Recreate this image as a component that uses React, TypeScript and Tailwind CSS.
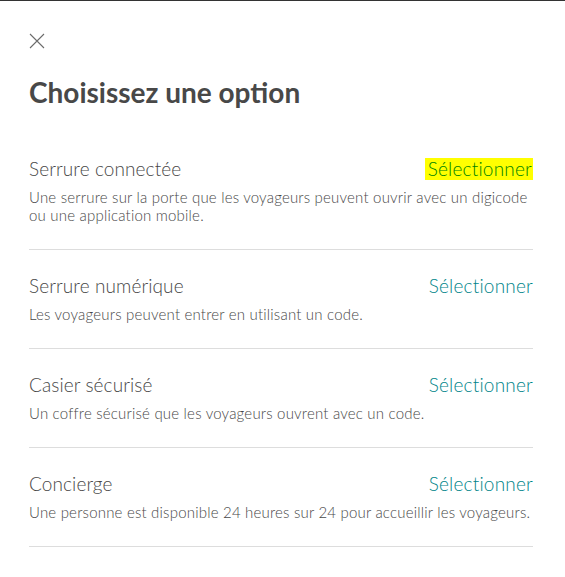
import React from "react";

const options = [
  {
    title: "Serrure connectée",
    desc: "Une serrure sur la porte que les voyageurs peuvent ouvrir avec un digicode ou une application mobile.",
    highlighted: true,
  },
  {
    title: "Serrure numérique",
    desc: "Les voyageurs peuvent entrer en utilisant un code.",
  },
  {
    title: "Casier sécurisé",
    desc: "Un coffre sécurisé que les voyageurs ouvrent avec un code.",
  },
  {
    title: "Concierge",
    desc: "Une personne est disponible 24 heures sur 24 pour accueillir les voyageurs.",
  },
];

export default function App() {
  return (
    <div
      className="min-h-[577px] w-full bg-white border-t border-[#333333] text-[#484848]"
      style={{ fontFamily: "Lato, 'Liberation Sans', sans-serif" }}
    >
      <div className="px-[29px] pt-[32px]">
        {/* close button */}
        <button type="button" className="block w-4 h-4 text-[#6b6b6b]">
          <svg viewBox="0 0 16 16" width="16" height="16" fill="none" stroke="currentColor" strokeWidth="1.1">
            <path d="M1 1L15 15M15 1L1 15" />
          </svg>
        </button>

        <h1 className="mt-[25px] text-[28px] leading-[36px] font-bold text-[#484848]">
          Choisissez une option
        </h1>

        <div className="mt-[23px] w-[504px]">
          {options.map((o) => (
            <div key={o.title} className="border-b border-[#dddddd] pt-[24px] pb-[25px]">
              <div className="flex items-center justify-between">
                <span className="text-[19px] leading-[24px] font-light tracking-[0.1px]">{o.title}</span>
                {o.highlighted ? (
                  <span className="text-[19px] leading-[22px] font-light tracking-[0.2px] text-[#008400] bg-[#ffff00] pl-[3px] pr-[1px]">
                    Sélectionner
                  </span>
                ) : (
                  <span className="text-[19px] leading-[24px] font-light tracking-[0.2px] text-[#008489]">
                    Sélectionner
                  </span>
                )}
              </div>
              <p className="mt-[7px] text-[15px] leading-[18px] tracking-[0.2px] font-light text-[#484848]">
                {o.desc}
              </p>
            </div>
          ))}
        </div>
      </div>
    </div>
  );
}
